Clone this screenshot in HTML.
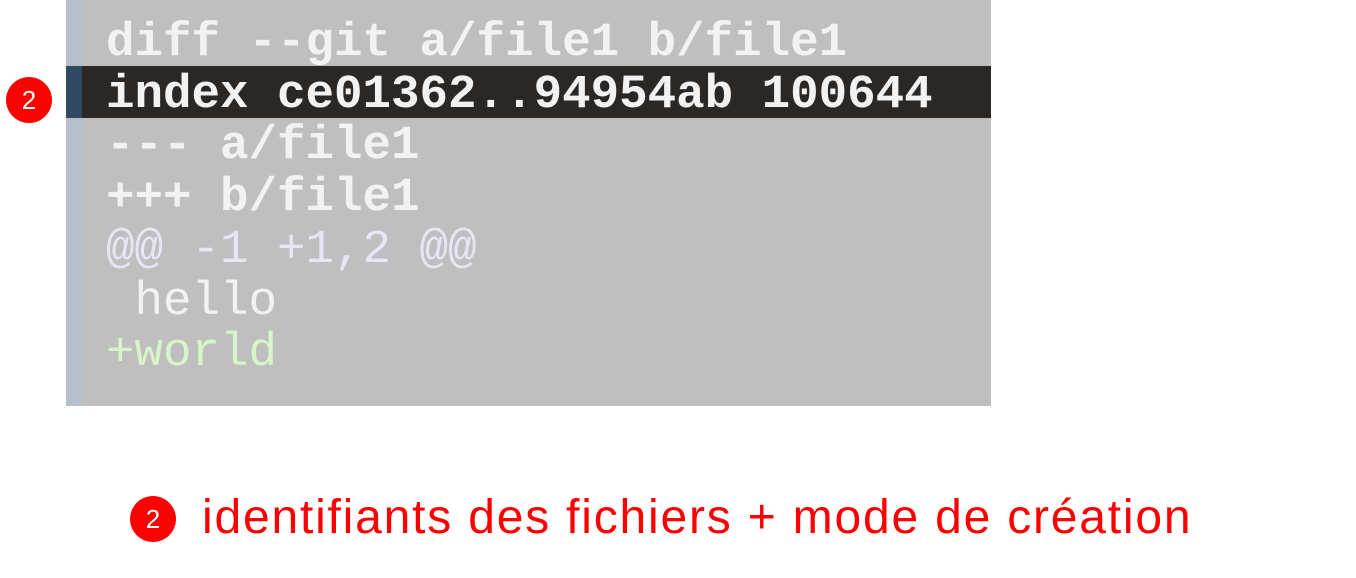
<!DOCTYPE html>
<html><head><meta charset="utf-8"><style>
body{margin:0;width:1356px;height:578px;background:#fff;position:relative;overflow:hidden;font-family:"Liberation Sans",sans-serif}
.panel{position:absolute;left:66px;top:0;width:925px;height:406px;background:#bfbfbf}
.bar{position:absolute;left:0;top:0;width:16px;height:406px;background:#b6c0ca}
.hl{position:absolute;left:0;top:66px;width:925px;height:52px;background:#2b2725}
.hlbar{position:absolute;left:0;top:66px;width:16px;height:52px;background:#2e4a62}
pre{position:absolute;left:40px;top:18px;margin:0;font-family:"Liberation Mono",monospace;font-size:47.5px;line-height:51.7px;color:#f2f2f2;font-weight:bold}
.n{font-weight:normal}
.p{color:#e6e6f5;font-weight:normal}
.g{color:#d7f5c8;font-weight:normal}
.c{position:absolute;width:46px;height:46px;border-radius:50%;background:#f00;color:#fff;font-size:26px;text-align:center;line-height:46px}
.t{position:absolute;left:202px;top:488px;font-size:48px;letter-spacing:1.8px;color:#f00;white-space:nowrap;line-height:60px}
</style></head><body>
<div class="panel"><div class="bar"></div><div class="hl"></div><div class="hlbar"></div>
<pre>diff --git a/file1 b/file1
index ce01362..94954ab 100644
--- a/file1
+++ b/file1
<span class="p">@@ -1 +1,2 @@</span>
<span class="n"> hello</span>
<span class="g">+world</span></pre></div>
<div class="c" style="left:6px;top:77px">2</div>
<div class="c" style="left:130px;top:496px">2</div>
<div class="t">identifiants des fichiers + mode de création</div>
</body></html>
